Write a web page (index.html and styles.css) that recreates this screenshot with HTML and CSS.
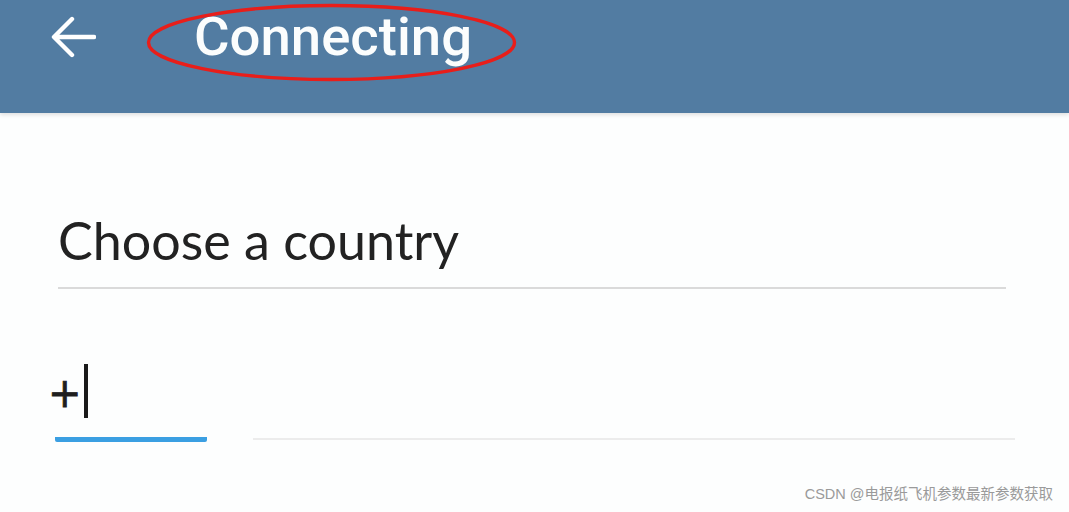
FILE: index.html
```html
<!DOCTYPE html>
<html>
<head>
<meta charset="utf-8">
<link rel="stylesheet" href="styles.css">
</head>
<body>
<div class="app">
  <header class="bar">
    <svg class="back" width="46" height="46" viewBox="0 0 46 46">
      <path d="M44 21 H5 M22 3 L4 21 L22 39" fill="none" stroke="#fff" stroke-width="4.4" stroke-linecap="round" stroke-linejoin="round"/>
    </svg>
    <div class="title-wrap">
      <span class="title">Connecting</span>
      <svg class="circle" width="372" height="80" viewBox="0 0 372 80">
        <ellipse cx="185.5" cy="39.5" rx="183" ry="37" fill="none" stroke="#e81e1a" stroke-width="3.4"/>
      </svg>
    </div>
  </header>
  <main class="form">
    <div class="country">Choose a country</div>
    <div class="phone">
      <div class="code"><span class="plus">+</span><span class="caret"></span></div>
      <div class="number"></div>
    </div>
  </main>
  <div class="mark">CSDN @电报纸飞机参数最新参数获取</div>
</div>
</body>
</html>
```
FILE: styles.css
```css
* { box-sizing: border-box; }
html, body { margin: 0; padding: 0; }
body { width: 1069px; height: 512px; overflow: hidden; background: #fdfefe; }
.app { position: relative; width: 1069px; height: 512px; }
.bar {
  height: 113px;
  background: #527ca2;
  display: flex;
  align-items: flex-start;
  box-shadow: 0 2px 4px rgba(0,0,0,0.12);
}
.back { margin: 16px 0 0 50px; }
.title-wrap { position: relative; margin-left: 50px; width: 372px; height: 80px; }
.title {
  position: absolute;
  left: 48px; top: 1px;
  font-family: Roboto, "Liberation Sans", sans-serif;
  font-weight: 500;
  font-size: 54.5px;
  line-height: 70px;
  color: #fbfdfd;
}
.circle { position: absolute; left: 0; top: 3px; }
.form { padding: 97px 54px 0 55px; }
.country {
  margin-left: 3px;
  width: 948px;
  font-family: Lato, "Noto Sans", sans-serif;
  font-size: 52px;
  line-height: 60px;
  color: #222;
  padding-bottom: 17px;
  border-bottom: 2px solid #dadada;
}
.phone { display: flex; align-items: flex-end; margin-top: 79px; gap: 46px; }
.code {
  width: 152px;
  height: 74px;
  border-bottom: 5px solid #3b9fe2;
  border-radius: 0 0 2px 2px;
  position: relative;
}
.plus {
  position: absolute; left: -7px; top: 0px;
  font-family: "DejaVu Sans", sans-serif;
  font-size: 40px; line-height: 50px; font-weight: 400;
  color: #1e1e1e;
  -webkit-text-stroke: 0.8px #1e1e1e;
}
.caret { position: absolute; left: 29px; top: -4px; width: 4px; height: 54px; background: #1a1a1a; }
.number { flex: 0 0 762px; height: 2px; background: #ececec; margin-bottom: 2px; }
.mark {
  position: absolute; right: 16px; bottom: 9px;
  font-family: "Liberation Sans", "Noto Sans CJK SC", sans-serif;
  font-size: 14.5px; color: #9a9a9a;
}
```
